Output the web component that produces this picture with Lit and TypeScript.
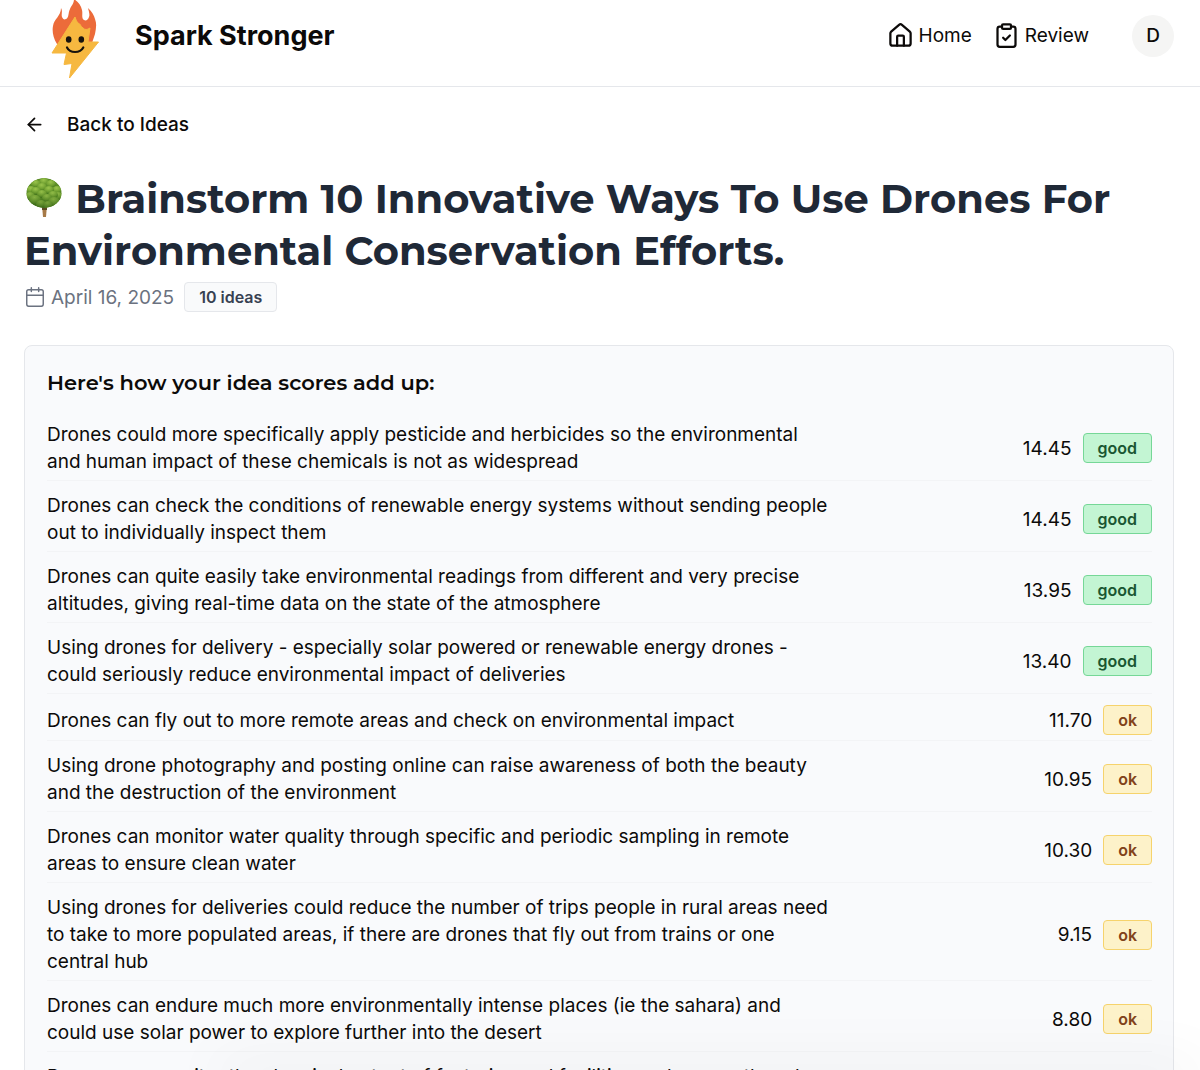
import { LitElement, html, css, svg } from "lit";
import { customElement, property } from "lit/decorators.js";

type Rating = "good" | "ok";

interface Idea {
  text: string;
  score: number;
  rating: Rating;
}

const IDEAS: Idea[] = [
  { text: "Drones could more specifically apply pesticide and herbicides so the environmental and human impact of these chemicals is not as widespread", score: 14.45, rating: "good" },
  { text: "Drones can check the conditions of renewable energy systems without sending people out to individually inspect them", score: 14.45, rating: "good" },
  { text: "Drones can quite easily take environmental readings from different and very precise altitudes, giving real-time data on the state of the atmosphere", score: 13.95, rating: "good" },
  { text: "Using drones for delivery - especially solar powered or renewable energy drones - could seriously reduce environmental impact of deliveries", score: 13.4, rating: "good" },
  { text: "Drones can fly out to more remote areas and check on environmental impact", score: 11.7, rating: "ok" },
  { text: "Using drone photography and posting online can raise awareness of both the beauty and the destruction of the environment", score: 10.95, rating: "ok" },
  { text: "Drones can monitor water quality through specific and periodic sampling in remote areas to ensure clean water", score: 10.3, rating: "ok" },
  { text: "Using drones for deliveries could reduce the number of trips people in rural areas need to take to more populated areas, if there are drones that fly out from trains or one central hub", score: 9.15, rating: "ok" },
  { text: "Drones can endure much more environmentally intense places (ie the sahara) and could use solar power to explore further into the desert", score: 8.8, rating: "ok" },
  { text: "Drones can monitor the chemical output of factories and facilities and ensure they do not pollute", score: 8.1, rating: "ok" },
];

const logo = html`<svg class="logo" viewBox="0 -5 50 84" aria-hidden="true">
  <path fill="#ec6b3a" d="M7 43C3 37 2 30 3 25c1-7 8-10 8-18 2 3 0 6 1 9 1 2 2 3 4 2 3-1 2-6 4-10 1-3 4-5 4-10 4 3 7 6 8 11 1 4-1 8 2 10 2 1 4 0 5-3 1-2 0-5-1-9 4 4 6 7 7 11 2 5 1 10 0 15l-3 9z"/>
  <path fill="#f6b840" stroke="#f6b840" stroke-linejoin="round" d="M25 16 2 52h14.500L14 63.500l8-1L19.500 77l29-36H38l2-14c-3 2-5 2-7 0-3-2-2-4-5-5-1-1-2-3-3-6z"/>
  <ellipse cx="18.700" cy="38.500" rx="2.800" ry="3.300" fill="#17130d"/>
  <ellipse cx="31.300" cy="38.500" rx="2.800" ry="3.300" fill="#17130d"/>
  <path d="M17 46.500c3 6 13 6 16.300 0" fill="none" stroke="#17130d" stroke-width="2.200" stroke-linecap="round"/>
</svg>`;

/* Leaf clusters, drawn from back to front: x, y, radius. */
const LEAVES: [number, number, number][] = [
  [20, 5, 5], [12, 7, 5], [27, 7, 5], [7, 13, 5], [33, 13, 5], [18, 10, 5], [25, 13, 5],
  [12, 14, 5], [6, 19, 5], [34, 19, 5], [18, 17, 5], [29, 18, 5], [11, 23, 6],
  [23, 21, 5], [30, 25, 6], [17, 27, 5], [24, 28, 5],
];

const tree = html`<svg class="tree" viewBox="0 0 40 42" role="img" aria-label="Tree">
  <defs>
    <radialGradient id="leaf" cx=".45" cy=".25" r=".75">
      <stop offset="0" stop-color="#9ac44c"/><stop offset=".6" stop-color="#6f9f30"/><stop offset="1" stop-color="#44751c"/>
    </radialGradient>
    <linearGradient id="shade" x2="0" y2="1">
      <stop offset=".4" stop-color="#1f4a10" stop-opacity="0"/><stop offset="1" stop-color="#1f4a10" stop-opacity=".4"/>
    </linearGradient>
    <clipPath id="crown"><ellipse cx="20" cy="16" rx="17.500" ry="15"/></clipPath>
  </defs>
  <path d="M18 28h5l-1 12h-3z" fill="#a67a48"/>
  <path d="M18 28h5v5h-5z" fill="#5d4a22"/>
  <g clip-path="url(#crown)">
    <ellipse cx="20" cy="16" rx="18" ry="15" fill="#5b8c26"/>
    ${LEAVES.map(([x, y, r]) => svg`<ellipse cx=${x} cy=${y} rx=${r} ry=${r - 1} fill="url(#leaf)"/>`)}
    <ellipse cx="20" cy="16" rx="18" ry="15" fill="url(#shade)"/>
  </g>
</svg>`;

const houseIcon = html`<svg class="line" width="27" height="27" viewBox="0 0 24 24" aria-hidden="true"><path d="M15 21v-8a1 1 0 0 0-1-1h-4a1 1 0 0 0-1 1v8"/><path d="M3 10a2 2 0 0 1 .709-1.528l7-5.999a2 2 0 0 1 2.582 0l7 5.999A2 2 0 0 1 21 10v9a2 2 0 0 1-2 2H5a2 2 0 0 1-2-2z"/></svg>`;
const clipboardIcon = html`<svg class="line" width="27" height="27" viewBox="0 0 24 24" aria-hidden="true"><rect width="8" height="4" x="8" y="2" rx="1"/><path d="M16 4h2a2 2 0 0 1 2 2v14a2 2 0 0 1-2 2H6a2 2 0 0 1-2-2V6a2 2 0 0 1 2-2h2"/><path d="m9 14 2 2 4-4"/></svg>`;
const arrowIcon = html`<svg class="line" width="21" height="21" viewBox="0 0 24 24" aria-hidden="true"><path d="m12 19-7-7 7-7"/><path d="M19 12H5"/></svg>`;
const calendarIcon = html`<svg class="line thin" width="22" height="22" viewBox="0 0 24 24" aria-hidden="true"><path d="M8 2v4M16 2v4M3 10h18"/><rect width="18" height="18" x="3" y="4" rx="2"/></svg>`;

@customElement("rating-badge")
export class RatingBadge extends LitElement {
  @property() rating: Rating = "ok";

  static styles = css`
    .badge { display: block; padding: 0 14px; border: 1px solid; border-radius: 4px; font-size: 16px; line-height: 28px; font-weight: 600; }
    .good { color: #1a5632; background: #c3f5d3; border-color: #76d797; }
    .ok { color: #81421a; background: #fdf2c9; border-color: #f6d36c; }
  `;

  render() {
    return html`<span class="badge ${this.rating}">${this.rating}</span>`;
  }
}

@customElement("app-root")
export class AppRoot extends LitElement {
  static styles = css`
    :host { display: block; min-height: 100vh; background: #fff; color: #0c0a09; font-family: Inter, "Liberation Sans", sans-serif; font-size: 19px; line-height: 27px; }
    a { color: inherit; text-decoration: none; }
    svg { display: block; flex: none; }
    .line { fill: none; stroke: currentColor; stroke-width: 2; stroke-linecap: round; stroke-linejoin: round; }
    .thin { stroke-width: 1.6; }
    .bar { display: flex; align-items: center; justify-content: space-between; height: 87px; box-sizing: border-box; padding: 0 26px 15px 50px; border-bottom: 1px solid #e5e7eb; }
    .brand { display: flex; align-items: center; gap: 35px; font-size: 27px; line-height: 36px; font-weight: 700; }
    .logo { width: 50px; height: 84px; margin: -7px 0 -11px; }
    .nav { display: flex; align-items: center; gap: 21px; }
    .link { display: flex; align-items: center; gap: 5px; }
    .avatar { width: 42px; height: 42px; margin-left: 22px; padding: 0; border: 0; border-radius: 50%; background: #f5f5f4; color: inherit; font-family: inherit; font-size: 19px; font-weight: 500; line-height: 42px; }
    main { padding: 24px 26px 32px 24px; }
    .back { display: inline-flex; align-items: center; gap: 22px; font-weight: 500; }
    h1 { margin: 31px 0 5px; font: 700 40px/52px Montserrat, Inter, sans-serif; color: #1f2937; }
    .tree { display: inline-block; vertical-align: -6px; width: 40px; height: 42px; }
    .meta { display: flex; align-items: center; color: #6b7280; }
    .date { display: flex; align-items: center; gap: 5px; margin-right: 10px; }
    .count { padding: 0 14px; border: 1px solid #e5e7eb; border-radius: 4px; background: #f9fafb; color: #374151; font-size: 16px; line-height: 28px; font-weight: 600; }
    .card { margin-top: 33px; padding: 21px 21px 21px 22px; border: 1px solid #e5e7eb; border-radius: 8px; background: #f9fafc; }
    h2 { margin: 0 0 11px; font: 600 21px/32px Montserrat, Inter, sans-serif; }
    ul { list-style: none; margin: 0; padding: 0; }
    .idea { display: flex; align-items: center; justify-content: space-between; padding: 11px 0 5px; border-bottom: 1px solid #f3f4f6; }
    .text { width: 71%; }
    .score { display: flex; align-items: center; gap: 11px; }
    .glow { position: fixed; left: 220px; right: 0; bottom: -12px; height: 12px; box-shadow: 0 0 60px 4px rgba(0, 0, 0, 0.08); pointer-events: none; }
  `;

  render() {
    return html`
      <header class="bar">
        <a class="brand" href="#">${logo}<span>Spark Stronger</span></a>
        <nav class="nav">
          <a class="link" href="#home">${houseIcon}Home</a>
          <a class="link" href="#review">${clipboardIcon}Review</a>
          <button class="avatar" type="button">D</button>
        </nav>
      </header>
      <main>
        <a class="back" href="#ideas">${arrowIcon}Back to Ideas</a>
        <h1>${tree} Brainstorm 10 Innovative Ways To Use Drones For Environmental Conservation Efforts.</h1>
        <div class="meta">
          <span class="date">${calendarIcon}April 16, 2025</span>
          <span class="count">10 ideas</span>
        </div>
        <section class="card">
          <h2>Here's how your idea scores add up:</h2>
          <ul>
            ${IDEAS.map((idea) => html`<li class="idea">
              <span class="text">${idea.text}</span>
              <span class="score">${idea.score.toFixed(2)}<rating-badge .rating=${idea.rating}></rating-badge></span>
            </li>`)}
          </ul>
        </section>
      </main>
      <div class="glow" aria-hidden="true"></div>
    `;
  }
}
